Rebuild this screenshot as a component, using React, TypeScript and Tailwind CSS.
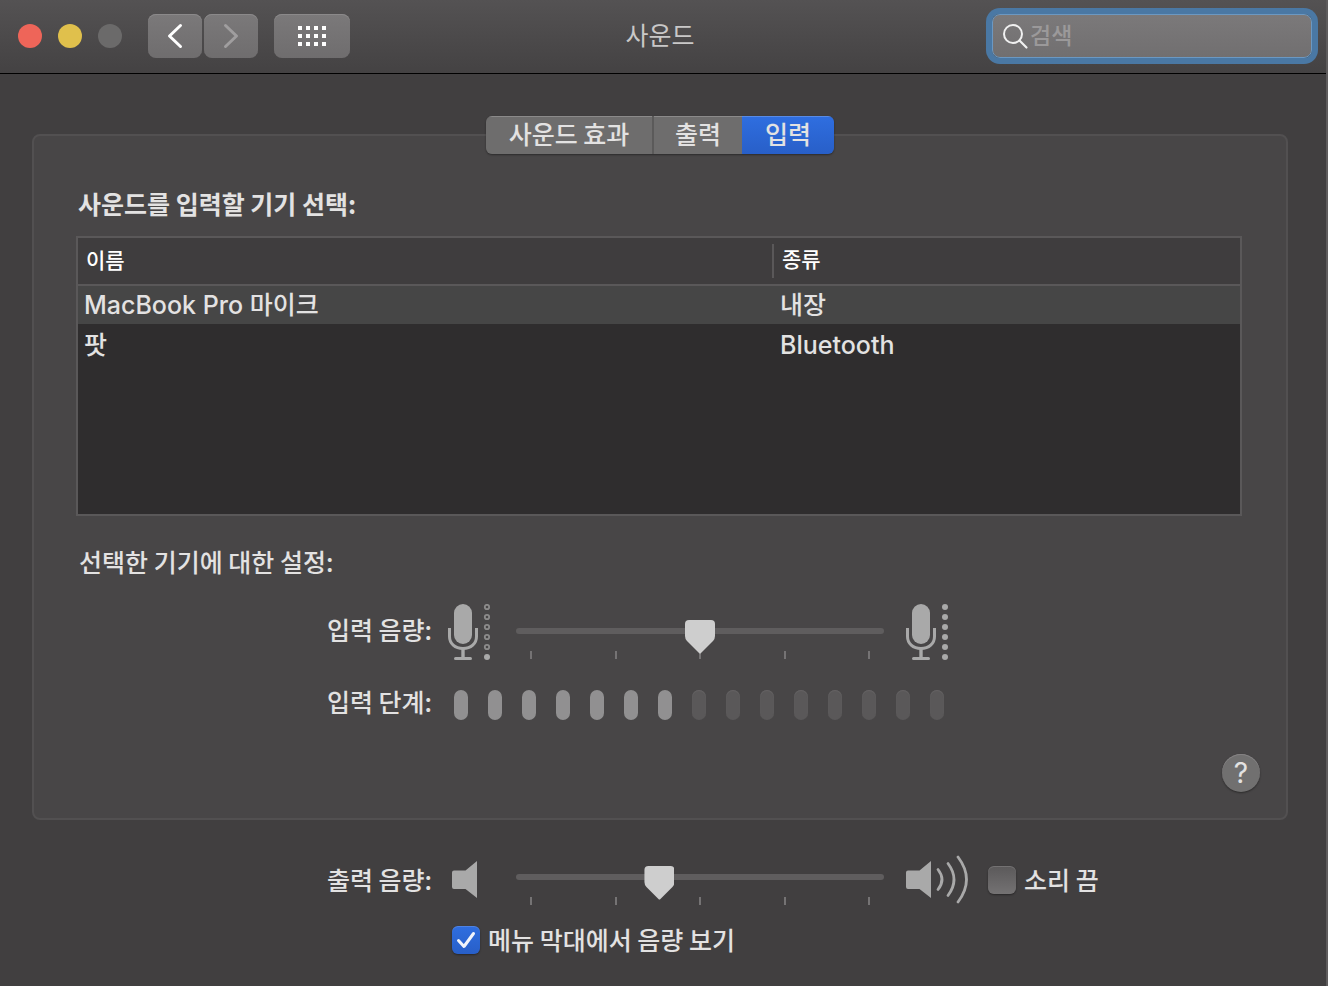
import { useState } from "react";

const TABS = [
  { label: "사운드 효과", width: "w-[168px]" },
  { label: "출력", width: "w-[88px]" },
  { label: "입력", width: "w-[92px]" },
];

const DEVICES = [
  { name: "MacBook Pro 마이크", kind: "내장" },
  { name: "팟", kind: "Bluetooth" },
];

const LEVELS = 15;
const ACTIVE_LEVELS = 7;

function Microphone({ loud }: { loud: boolean }) {
  return (
    <svg width="46" height="58" viewBox="0 0 46 58" fill="none" className="shrink-0" aria-hidden="true">
      <rect x="6" y="0" width="18" height="40" rx="9" fill="#a9a9a9" />
      <path d="M1.5 24v8.5c0 7 5.500 12 13.500 12s13.500-5 13.500-12V24" stroke="#a9a9a9" strokeWidth="3" />
      <path d="M15 45v9" stroke="#a9a9a9" strokeWidth="3.4" />
      <rect x="6" y="53" width="18" height="3" rx="1.5" fill="#a9a9a9" />
      {[3, 13, 23, 33, 43].map((y) =>
        loud ? (
          <circle key={y} cx="39" cy={y} r="3" fill="#a9a9a9" />
        ) : (
          <circle key={y} cx="39" cy={y} r="2.2" stroke="#8c8b8b" strokeWidth="1.8" />
        ),
      )}
      <circle cx="39" cy="53" r="3" fill="#a9a9a9" />
    </svg>
  );
}

function Speaker({ loud }: { loud: boolean }) {
  return (
    <svg
      width={loud ? 64 : 46}
      height="50"
      viewBox={loud ? "0 0 64 50" : "-4 0 46 50"}
      fill="none"
      className="shrink-0"
      aria-hidden="true"
    >
      <path d="M2 15.500H13.500L25 6V43L13.500 34H2Q0 34 0 32V17.500Q0 15.500 2 15.500Z" fill="#a9a9a9" />
      {loud && (
        <g stroke="#a9a9a9" strokeWidth="2.8" strokeLinecap="round">
          <path d="M32 14.500Q40 24.500 32 34.500" />
          <path d="M42 8.500Q54 24.500 42 40.500" />
          <path d="M52 2Q69 24.500 52 47" />
        </g>
      )}
    </svg>
  );
}

function VolumeSlider({ id, initial }: { id: string; initial: number }) {
  const [value, setValue] = useState(initial);
  return (
    <div className="relative w-[368px]">
      <div className="flex justify-between px-[14px] pt-[23px]" aria-hidden="true">
        {[0, 1, 2, 3, 4].map((tick) => (
          <span key={tick} className="h-2 w-0.5 bg-[#757374]" />
        ))}
      </div>
      <input
        id={id}
        type="range"
        min={0}
        max={100}
        value={value}
        onChange={(event) => setValue(Number(event.target.value))}
        className="absolute inset-x-0 top-0 m-0 block h-1.5 w-full appearance-none rounded-full bg-[#5f5d5e] outline-none [&::-webkit-slider-runnable-track]:h-1.5 [&::-webkit-slider-thumb]:mt-[-8px] [&::-webkit-slider-thumb]:h-[34px] [&::-webkit-slider-thumb]:w-[30px] [&::-webkit-slider-thumb]:appearance-none [&::-webkit-slider-thumb]:bg-[#cecece] [&::-webkit-slider-thumb]:[clip-path:path('M4_0H26Q30_0_30_4V16Q30_19_28_21L16_33Q15_34_14_33L2_21Q0_19_0_16V4Q0_0_4_0Z')]"
      />
    </div>
  );
}

function Checkbox({ id, label, initial }: { id: string; label: string; initial: boolean }) {
  const [checked, setChecked] = useState(initial);
  return (
    <div className="flex h-7 items-center gap-2">
      <span className="relative size-7">
        <input
          id={id}
          type="checkbox"
          checked={checked}
          onChange={() => setChecked(!checked)}
          className="block size-7 appearance-none rounded-md bg-linear-to-b from-[#5b595a] to-[#747273] shadow-[0_1px_2px_rgba(0,0,0,0.4),inset_0_1px_0_rgba(255,255,255,0.15)] checked:from-[#2f6ee0] checked:to-[#285fc8]"
        />
        {checked && (
          <svg viewBox="0 0 28 28" fill="none" className="pointer-events-none absolute inset-0" aria-hidden="true">
            <path d="M6.500 14.500L12 20.500L21.500 7.500" stroke="#f1f4fb" strokeWidth="3" strokeLinecap="round" strokeLinejoin="round" />
          </svg>
        )}
      </span>
      <label htmlFor={id} className="pb-0.5">
        {label}
      </label>
    </div>
  );
}

export default function App() {
  const [tab, setTab] = useState(2);
  const [selected, setSelected] = useState(0);
  const toolbarButton =
    "flex h-11 items-center justify-center rounded-lg bg-linear-to-b from-[#7b797a] to-[#6f6d6e] shadow-[inset_0_1px_0_#8b898a]";

  return (
    <div className="min-h-screen border-r-2 border-[#5e5c5d] bg-[#413f40] font-['Noto_Sans_CJK_KR','Inter',sans-serif] text-[25px] leading-8 font-medium text-[#e3e2e2]">
      <header className="grid h-[74px] grid-cols-[1fr_auto_1fr] items-center border-b border-black bg-linear-to-b from-[#545253] to-[#444243] pr-[14px] pb-px pl-2">
        <div className="ml-[10px] flex items-center">
          <div className="flex gap-4">
            <button aria-label="닫기" className="size-6 rounded-full bg-[#ee6559]" />
            <button aria-label="최소화" className="size-6 rounded-full bg-[#e0c04c]" />
            <button aria-label="확대" disabled className="size-6 rounded-full bg-[#6b6a6a]" />
          </div>
          <div className="ml-[26px] flex gap-0.5">
            <button aria-label="뒤로" className={`${toolbarButton} w-[54px]`}>
              <svg width="16" height="26" viewBox="0 0 16 26" fill="none">
                <path d="M13.500 2.500L2.500 13L13.500 23.500" stroke="#fff" strokeWidth="3" strokeLinecap="round" strokeLinejoin="round" />
              </svg>
            </button>
            <button aria-label="앞으로" disabled className={`${toolbarButton} w-[54px]`}>
              <svg width="16" height="26" viewBox="0 0 16 26" fill="none">
                <path d="M2.500 2.500L13.500 13L2.500 23.500" stroke="#a09e9f" strokeWidth="3" strokeLinecap="round" strokeLinejoin="round" />
              </svg>
            </button>
          </div>
          <button aria-label="모두 보기" className={`${toolbarButton} ml-4 w-[76px]`}>
            <svg width="28" height="20" viewBox="0 0 28 20" fill="#fff">
              {[0, 8, 16].map((y) => [0, 8, 16, 24].map((x) => <rect key={`${x}-${y}`} x={x} y={y} width="4" height="4" />))}
            </svg>
          </button>
        </div>
        <h1 className="pb-1 font-normal text-[#c9c8c8]">사운드</h1>
        <div className="flex h-11 w-80 items-center justify-self-end rounded-lg border border-[#6b98c2] bg-linear-to-b from-[#7b797a] to-[#716f70] pl-[9px] ring-6 ring-[#4a78a4]">
          <svg width="28" height="28" viewBox="0 0 28 28" fill="none" className="shrink-0" aria-hidden="true">
            <circle cx="11" cy="12" r="9" stroke="#f0f0f0" strokeWidth="2" />
            <path d="M17.500 18.500L24.500 25.500" stroke="#f0f0f0" strokeWidth="2.200" strokeLinecap="round" />
          </svg>
          <input
            type="search"
            aria-label="검색"
            placeholder="검색"
            className="min-w-0 flex-1 bg-transparent pb-1 text-[23px] outline-none placeholder:text-[#9b999a]"
          />
        </div>
      </header>

      <main className="pt-[42px] pr-[38px] pb-8 pl-8">
        <div role="tablist" className="relative mx-auto flex h-[38px] w-fit overflow-hidden rounded-md shadow-[0_1px_2px_rgba(0,0,0,0.4)]">
          {TABS.map(({ label, width }, index) => (
            <button
              key={label}
              role="tab"
              aria-selected={tab === index}
              onClick={() => setTab(index)}
              className={`${width} pb-1 shadow-[inset_0_1px_0_rgba(255,255,255,0.2)] ${
                tab === index ? "bg-linear-to-b from-[#2f6ee0] to-[#285fc8]" : "bg-[#6e6d6d]"
              } ${index === 0 ? "border-r-2 border-[#5b5a5a]" : ""}`}
            >
              {label}
            </button>
          ))}
        </div>

        <section className="mt-[-20px] rounded-lg border-2 border-[#525051] bg-[#484647] pt-[51px] pb-[26px]">
          <div className="pr-11 pl-[42px]">
            <h2 className="pl-0.5 font-bold">사운드를 입력할 기기 선택:</h2>
            <div className="mt-[17px] h-[280px] border-2 border-[#5a5859] bg-[#2f2d2e]">
              <table className="w-full table-fixed border-separate border-spacing-0 text-left font-['Inter','Noto_Sans_CJK_KR',sans-serif]">
                <colgroup>
                  <col />
                  <col className="w-[468px]" />
                </colgroup>
                <thead className="bg-[#3f3d3e] text-[21px] text-white">
                  <tr>
                    <th className="h-12 border-b-2 border-[#5a5859] p-0 pl-2 font-medium">이름</th>
                    <th className="h-12 border-b-2 border-[#5a5859] p-0 font-medium">
                      <div className="h-[34px] border-l-2 border-[#5a5859] pl-2">종류</div>
                    </th>
                  </tr>
                </thead>
                <tbody>
                  {DEVICES.map((device, index) => (
                    <tr key={device.name} onClick={() => setSelected(index)} aria-selected={selected === index}>
                      <td className={`h-10 border-b-2 border-transparent bg-clip-padding p-0 pl-1.5 ${selected === index ? "bg-[#464646]" : ""}`}>
                        {device.name}
                      </td>
                      <td className={`h-10 border-b-2 border-transparent bg-clip-padding p-0 pl-2 ${selected === index ? "bg-[#464646]" : ""}`}>
                        {device.kind}
                      </td>
                    </tr>
                  ))}
                </tbody>
              </table>
            </div>
            <h2 className="mt-[29px] pl-[3px]">선택한 기기에 대한 설정:</h2>
          </div>

          <div className="mt-[27px] flex gap-4">
            <label htmlFor="input-volume" className="w-[398px] pt-[9px] text-right">
              입력 음량:
            </label>
            <div className="flex items-start gap-[22px]">
              <Microphone loud={false} />
              <div className="pt-6">
                <VolumeSlider id="input-volume" initial={50} />
              </div>
              <Microphone loud />
            </div>
          </div>

          <div className="mt-7 flex h-[30px] items-center gap-[22px]">
            <span id="input-level" className="w-[398px] pb-2 text-right">
              입력 단계:
            </span>
            <div role="meter" aria-labelledby="input-level" aria-valuemin={0} aria-valuemax={LEVELS} aria-valuenow={ACTIVE_LEVELS} className="flex gap-5">
              {Array.from({ length: LEVELS }, (_, index) => (
                <span
                  key={index}
                  className={`h-[30px] w-[14px] rounded-full ${index < ACTIVE_LEVELS ? "bg-[#919091]" : "bg-[#5a5859] shadow-[inset_0_1px_1px_#656364]"}`}
                />
              ))}
            </div>
          </div>

          <div className="mt-[34px] flex justify-end pr-[26px]">
            <button aria-label="도움말" className="flex size-[38px] items-center justify-center rounded-full bg-[#717070] font-['Inter',sans-serif] text-[28px] font-normal shadow-[0_1px_2px_rgba(0,0,0,0.4),inset_0_1px_0_#858384]">
              ?
            </button>
          </div>
        </section>

        <div className="mt-[35px] flex gap-4">
          <label htmlFor="output-volume" className="w-[400px] pt-2 text-right">
            출력 음량:
          </label>
          <div className="flex items-start gap-[22px]">
            <Speaker loud={false} />
            <div className="pt-[19px]">
              <VolumeSlider id="output-volume" initial={38} />
            </div>
            <Speaker loud />
          </div>
          <div className="ml-0.5 pt-[11px]">
            <Checkbox id="mute" label="소리 끔" initial={false} />
          </div>
        </div>
        <div className="mt-[21px] pl-[420px]">
          <Checkbox id="menu-bar" label="메뉴 막대에서 음량 보기" initial />
        </div>
      </main>
    </div>
  );
}
